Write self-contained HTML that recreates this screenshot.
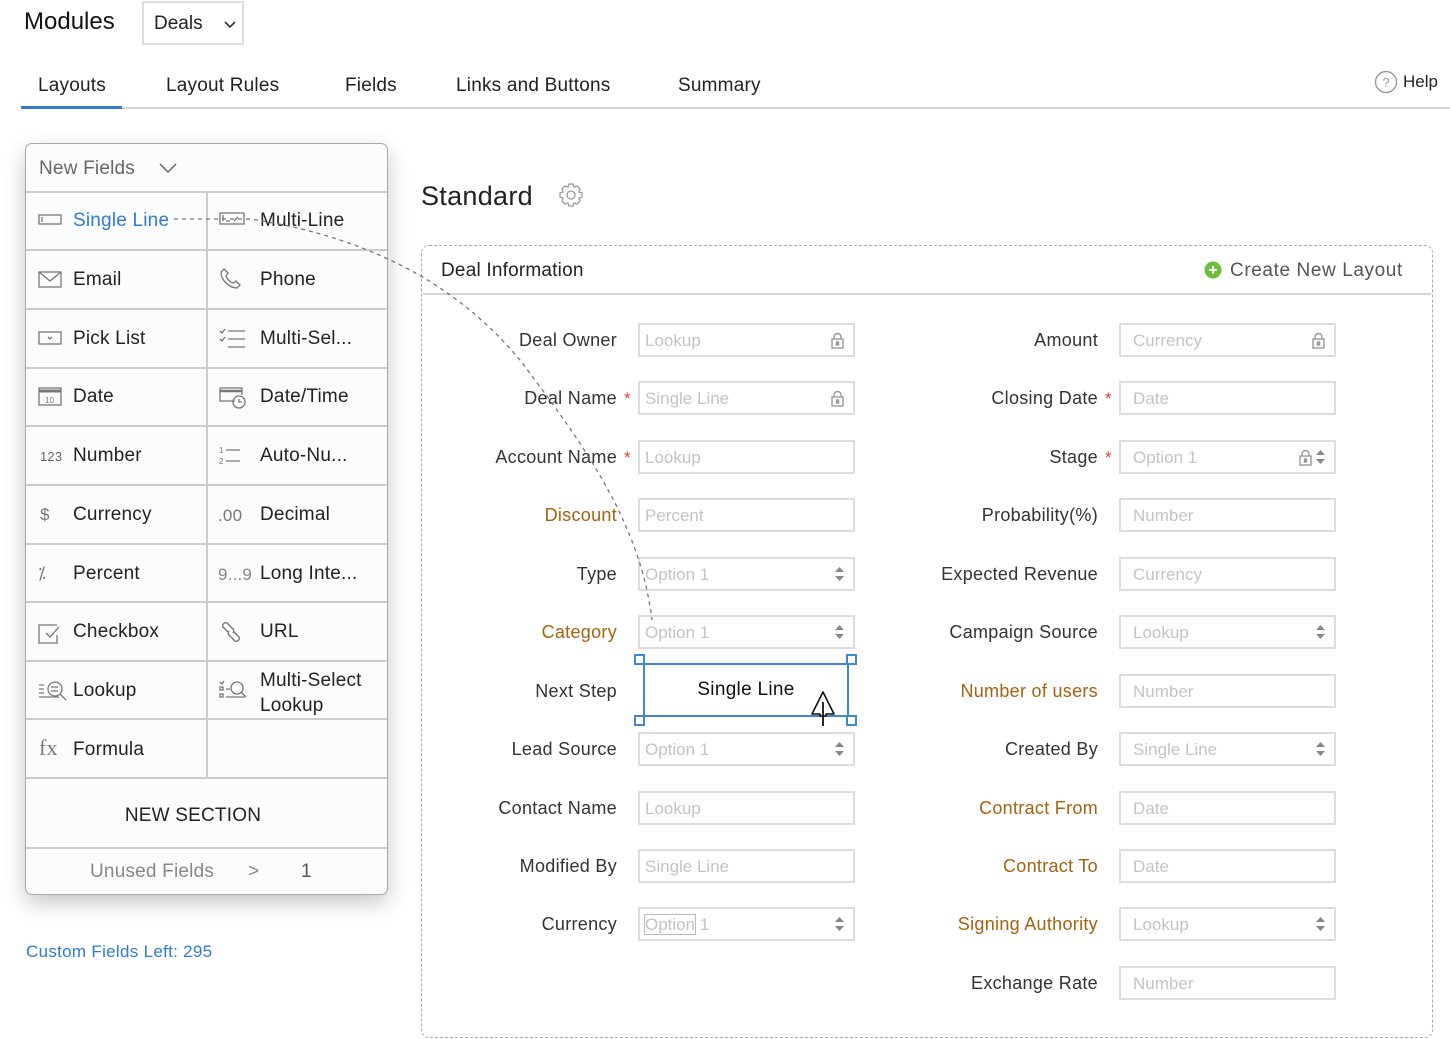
<!DOCTYPE html>
<html><head><meta charset="utf-8"><style>
*{box-sizing:border-box;margin:0;padding:0}
body{width:1450px;height:1039px;background:#fff;font-family:"Liberation Sans",sans-serif;color:#222;position:relative;overflow:hidden}
.a{position:absolute;white-space:nowrap}
.tab{position:absolute;top:75px;font-size:19px;color:#222;letter-spacing:0.2px}
.panel{position:absolute;left:25px;top:143px;width:363px;height:752px;border:1.5px solid #aaa;border-radius:7px;background:#fbfcfe;box-shadow:0 8px 22px rgba(0,0,0,.22)}
.hl{position:absolute;left:0;width:100%;height:1.5px;background:#ccc}
.cell{position:absolute;font-size:19px;color:#222;white-space:nowrap;letter-spacing:0.2px}
.ic{position:absolute}
.lbl{position:absolute;font-size:18px;color:#333;text-align:right;white-space:nowrap;letter-spacing:0.3px}
.or{color:#a5620f}
.in{position:absolute;width:217px;height:34px;border:2px solid #ddd;font-size:17px;color:#c4c4c4;padding:6px 0 0 5px;white-space:nowrap;background:#fff}
.ast{position:absolute;color:#e53b3b;font-size:17px}
.lk{position:absolute;right:9px;top:7px}
.ar{position:absolute;right:9px;top:8px}
</style></head><body>

<div class="a" style="left:24px;top:8px;font-size:24px;color:#111">Modules</div>
<div class="a" style="left:142px;top:1px;width:102px;height:44px;border:2px solid #ddd;font-size:19px;padding:10px 0 0 10px">Deals
<svg style="position:absolute;left:80px;top:18px" width="12" height="8"><path d="M1 1l5 5 5-5" stroke="#333" stroke-width="1.6" fill="none"/></svg></div>

<div class="tab" style="left:38px">Layouts</div>
<div class="tab" style="left:166px">Layout Rules</div>
<div class="tab" style="left:345px">Fields</div>
<div class="tab" style="left:456px">Links and Buttons</div>
<div class="tab" style="left:678px">Summary</div>
<div class="a" style="left:21px;top:107px;width:1429px;height:2px;background:#d6d6d6"></div>
<div class="a" style="left:21px;top:106px;width:101px;height:3px;background:#2f7bd0"></div>
<svg class="a" style="left:1374px;top:70px" width="24" height="24"><circle cx="12" cy="12" r="10.5" stroke="#999" stroke-width="1.4" fill="none"/><text x="12" y="17" font-size="13" text-anchor="middle" fill="#999" font-family="Liberation Sans">?</text></svg>
<div class="a" style="left:1403px;top:72px;font-size:17px">Help</div>

<!-- left panel -->
<div class="panel">
 <div class="cell" style="left:13px;top:14px;color:#666">New Fields</div>
 <svg class="ic" style="left:133px;top:19px" width="18" height="11"><path d="M1 1l8 8 8-8" stroke="#666" stroke-width="1.5" fill="none"/></svg>
 <div class="hl" style="top:47px"></div>
 <div style="position:absolute;left:180px;top:47px;width:1.5px;height:587px;background:#ccc"></div>
 <div class="hl" style="top:105px"></div><div class="hl" style="top:164px"></div><div class="hl" style="top:223px"></div><div class="hl" style="top:281px"></div><div class="hl" style="top:340px"></div><div class="hl" style="top:399px"></div><div class="hl" style="top:457px"></div><div class="hl" style="top:516px"></div><div class="hl" style="top:574px"></div><div class="hl" style="top:633px"></div><div class="hl" style="top:703px"></div>

 <div class="cell" style="left:47px;top:66px;color:#2f7bd0">Single Line</div>
 <div class="cell" style="left:234px;top:66px">Multi-Line</div>
 <div class="cell" style="left:47px;top:125px">Email</div>
 <div class="cell" style="left:234px;top:125px">Phone</div>
 <div class="cell" style="left:47px;top:184px">Pick List</div>
 <div class="cell" style="left:234px;top:184px">Multi-Sel...</div>
 <div class="cell" style="left:47px;top:242px">Date</div>
 <div class="cell" style="left:234px;top:242px">Date/Time</div>
 <div class="cell" style="left:47px;top:301px">Number</div>
 <div class="cell" style="left:234px;top:301px">Auto-Nu...</div>
 <div class="cell" style="left:47px;top:360px">Currency</div>
 <div class="cell" style="left:234px;top:360px">Decimal</div>
 <div class="cell" style="left:47px;top:419px">Percent</div>
 <div class="cell" style="left:234px;top:419px">Long Inte...</div>
 <div class="cell" style="left:47px;top:477px">Checkbox</div>
 <div class="cell" style="left:234px;top:477px">URL</div>
 <div class="cell" style="left:47px;top:536px">Lookup</div>
 <div class="cell" style="left:234px;top:524px;line-height:25px">Multi-Select<br>Lookup</div>
 <div class="cell" style="left:47px;top:595px">Formula</div>
 <div class="cell" style="left:0;width:334px;text-align:center;top:661px">NEW SECTION</div>
 <div class="cell" style="left:64px;top:717px;color:#888">Unused Fields</div>
 <div class="cell" style="left:222px;top:717px;color:#888">&gt;</div>
 <div class="cell" style="left:275px;top:717px;color:#555">1</div>

 <svg class="ic" style="left:12px;top:68px" width="26" height="150" fill="none" stroke="#777" stroke-width="1.3">
  <rect x="1" y="3" width="22" height="9"/><path d="M4 5v5"/>
  <rect x="1" y="60" width="22" height="15"/><path d="M1 60l11 9 11-9"/>
  <rect x="1" y="120" width="22" height="12"/><path d="M10 125l2 2 2-2"/>
 </svg>
 <svg class="ic" style="left:12px;top:241px" width="26" height="30" fill="none" stroke="#777" stroke-width="1.3"><rect x="1" y="3" width="22" height="17"/><path d="M1 6h22" stroke-width="3"/><text x="7" y="18" font-size="8" fill="#777" stroke="none">10</text></svg>
 <div class="cell" style="left:14px;top:305px;font-size:13px;color:#666">123</div>
 <div class="cell" style="left:14px;top:361px;font-size:17px;color:#777">$</div>
 <div class="cell" style="left:12px;top:420px;font-size:17px;color:#777">⁒</div>
 <svg class="ic" style="left:12px;top:477px" width="26" height="26" fill="none" stroke="#777" stroke-width="1.3"><path d="M19 4H1v18h18v-8"/><path d="M8 12l4 4 9-10"/></svg>
 <svg class="ic" style="left:12px;top:534px" width="32" height="26" fill="none" stroke="#777" stroke-width="1.3"><path d="M1 7h5M1 11h5M1 15h5M1 19h20"/><circle cx="17" cy="11" r="7"/><path d="M13 9h7M13 13h7M22 16l6 6"/></svg>
 <div class="cell" style="left:13px;top:591px;font-size:22px;color:#777;font-family:'Liberation Serif',serif">fx</div>

 <svg class="ic" style="left:193px;top:66px" width="28" height="20" fill="none" stroke="#777" stroke-width="1.3"><rect x="1" y="3" width="24" height="11"/><path d="M4 5v6M7 11h4M15 11l4-4"/></svg>
 <svg class="ic" style="left:193px;top:123px" width="24" height="24" fill="none" stroke="#777" stroke-width="1.3"><path d="M5 2l4 4-2 3c1 3 4 6 7 7l3-2 4 4-3 3C10 21 2 13 2 5z"/></svg>
 <svg class="ic" style="left:193px;top:183px" width="28" height="24" fill="none" stroke="#777" stroke-width="1.3"><path d="M1 4l2 2 3-4M1 12l2 2 3-4M9 4h17M9 12h17M9 20h17"/></svg>
 <svg class="ic" style="left:193px;top:241px" width="30" height="26" fill="none" stroke="#777" stroke-width="1.3"><path d="M16 16H1V3h22v7"/><path d="M1 6h22" stroke-width="2.5"/><circle cx="20" cy="17" r="6"/><path d="M20 14v3h3"/></svg>
 <svg class="ic" style="left:193px;top:301px" width="26" height="22" fill="none" stroke="#777" stroke-width="1.3"><text x="0" y="8" font-size="8" fill="#777" stroke="none">1</text><text x="0" y="19" font-size="8" fill="#777" stroke="none">2</text><path d="M7 5h14M7 16h14"/></svg>
 <div class="cell" style="left:192px;top:362px;font-size:17px;color:#777">.00</div>
 <div class="cell" style="left:192px;top:421px;font-size:17px;color:#888">9...9</div>
 <svg class="ic" style="left:193px;top:476px" width="28" height="28" fill="none" stroke="#777" stroke-width="1.4"><path d="M9 12L4 7a3 3 0 014-4l6 6a3 3 0 010 4M15 12l5 5a3 3 0 01-4 4l-6-6a3 3 0 010-4"/></svg>
 <svg class="ic" style="left:193px;top:534px" width="32" height="26" fill="none" stroke="#777" stroke-width="1.3"><rect x="1" y="9" width="3" height="3"/><rect x="1" y="16" width="3" height="3"/><path d="M1 4l2 2 2-3M7 11h4M7 19h19"/><circle cx="18" cy="10" r="6"/><path d="M22 14l5 5"/></svg>
</div>

<div class="a" style="left:26px;top:942px;font-size:17px;color:#2f7bd0;letter-spacing:0.3px">Custom Fields Left: 295</div>

<!-- right area -->
<div class="a" style="left:421px;top:181px;font-size:27px;color:#222;letter-spacing:0.3px">Standard</div>
<svg class="a" style="left:558px;top:182px" width="26" height="26" fill="none" stroke="#999" stroke-width="1.3"><circle cx="13" cy="13" r="4"/><path d="M11 2h4l1 3 3-1 3 3-1 3 3 1v4l-3 1 1 3-3 3-3-1-1 3h-4l-1-3-3 1-3-3 1-3-3-1v-4l3-1-1-3 3-3 3 1z"/></svg>

<div class="a" style="left:421px;top:245px;width:1012px;height:793px;border:1.5px dashed #aaa;border-radius:8px"></div>
<div class="a" style="left:441px;top:260px;font-size:19px;color:#222;letter-spacing:0.2px">Deal Information</div>
<svg class="a" style="left:1204px;top:261px" width="18" height="18"><circle cx="9" cy="9" r="8.5" fill="#6bbf3b"/><path d="M9 5v8M5 9h8" stroke="#fff" stroke-width="2"/></svg>
<div class="a" style="left:1230px;top:260px;font-size:19px;color:#555;letter-spacing:0.6px">Create New Layout</div>
<div class="a" style="left:423px;top:293px;width:1008px;height:1.5px;background:#d6d6d6"></div>

<!-- left column -->
<div class="lbl" style="left:380px;width:237px;top:330px">Deal Owner</div>
<div class="lbl" style="left:380px;width:237px;top:388px">Deal Name</div><div class="ast" style="left:624px;top:389px">*</div>
<div class="lbl" style="left:380px;width:237px;top:447px">Account Name</div><div class="ast" style="left:624px;top:448px">*</div>
<div class="lbl or" style="left:380px;width:237px;top:505px">Discount</div>
<div class="lbl" style="left:380px;width:237px;top:564px">Type</div>
<div class="lbl or" style="left:380px;width:237px;top:622px">Category</div>
<div class="lbl" style="left:380px;width:237px;top:681px">Next Step</div>
<div class="lbl" style="left:380px;width:237px;top:739px">Lead Source</div>
<div class="lbl" style="left:380px;width:237px;top:798px">Contact Name</div>
<div class="lbl" style="left:380px;width:237px;top:856px">Modified By</div>
<div class="lbl" style="left:380px;width:237px;top:914px">Currency</div>

<div class="in" style="left:638px;top:323px">Lookup<svg class="lk" width="13" height="17" fill="none" stroke="#999" stroke-width="1.4"><path d="M3 7V5a3.5 3.5 0 017 0v2"/><rect x="1" y="7" width="11" height="9"/><rect x="5.5" y="10" width="2" height="3" fill="#999"/></svg></div>
<div class="in" style="left:638px;top:381px">Single Line<svg class="lk" width="13" height="17" fill="none" stroke="#999" stroke-width="1.4"><path d="M3 7V5a3.5 3.5 0 017 0v2"/><rect x="1" y="7" width="11" height="9"/><rect x="5.5" y="10" width="2" height="3" fill="#999"/></svg></div>
<div class="in" style="left:638px;top:440px">Lookup</div>
<div class="in" style="left:638px;top:498px">Percent</div>
<div class="in" style="left:638px;top:557px">Option 1<svg class="ar" width="9" height="14"><path d="M4.5 0L9 5H0zM4.5 14L9 9H0z" fill="#888"/></svg></div>
<div class="in" style="left:638px;top:615px">Option 1<svg class="ar" width="9" height="14"><path d="M4.5 0L9 5H0zM4.5 14L9 9H0z" fill="#888"/></svg></div>
<div class="a" style="left:643px;top:663px;width:206px;height:54px;border:2.5px solid #3f87d0;background:#fff;font-size:19px;color:#111;text-align:center;padding-top:14px;letter-spacing:0.3px">Single Line</div>
<div class="a" style="left:634px;top:654px;width:11px;height:11px;border:2px solid #3f87d0;background:#fff"></div>
<div class="a" style="left:846px;top:654px;width:11px;height:11px;border:2px solid #3f87d0;background:#fff"></div>
<div class="a" style="left:634px;top:715px;width:11px;height:11px;border:2px solid #3f87d0;background:#fff"></div>
<div class="a" style="left:846px;top:715px;width:11px;height:11px;border:2px solid #3f87d0;background:#fff"></div>
<svg class="a" style="left:808px;top:690px" width="30" height="38"><path d="M15 2L4 24h8v2h6v-2h8z" fill="#fff" stroke="#111" stroke-width="1.6" stroke-linejoin="round"/><path d="M15 12v24" stroke="#111" stroke-width="1.8"/></svg>
<div class="in" style="left:638px;top:732px">Option 1<svg class="ar" width="9" height="14"><path d="M4.5 0L9 5H0zM4.5 14L9 9H0z" fill="#888"/></svg></div>
<div class="in" style="left:638px;top:791px">Lookup</div>
<div class="in" style="left:638px;top:849px">Single Line</div>
<div class="in" style="left:638px;top:907px"><span style="outline:1.5px solid #bbb">Option</span> 1<svg class="ar" width="9" height="14"><path d="M4.5 0L9 5H0zM4.5 14L9 9H0z" fill="#888"/></svg></div>

<!-- right column -->
<div class="lbl" style="left:860px;width:238px;top:330px">Amount</div>
<div class="lbl" style="left:860px;width:238px;top:388px">Closing Date</div><div class="ast" style="left:1105px;top:389px">*</div>
<div class="lbl" style="left:860px;width:238px;top:447px">Stage</div><div class="ast" style="left:1105px;top:448px">*</div>
<div class="lbl" style="left:860px;width:238px;top:505px">Probability(%)</div>
<div class="lbl" style="left:860px;width:238px;top:564px">Expected Revenue</div>
<div class="lbl" style="left:860px;width:238px;top:622px">Campaign Source</div>
<div class="lbl or" style="left:860px;width:238px;top:681px">Number of users</div>
<div class="lbl" style="left:860px;width:238px;top:739px">Created By</div>
<div class="lbl or" style="left:860px;width:238px;top:798px">Contract From</div>
<div class="lbl or" style="left:860px;width:238px;top:856px">Contract To</div>
<div class="lbl or" style="left:860px;width:238px;top:914px">Signing Authority</div>
<div class="lbl" style="left:860px;width:238px;top:973px">Exchange Rate</div>

<div class="in" style="left:1119px;top:323px;padding-left:12px">Currency<svg class="lk" width="13" height="17" fill="none" stroke="#999" stroke-width="1.4"><path d="M3 7V5a3.5 3.5 0 017 0v2"/><rect x="1" y="7" width="11" height="9"/><rect x="5.5" y="10" width="2" height="3" fill="#999"/></svg></div>
<div class="in" style="left:1119px;top:381px;padding-left:12px">Date</div>
<div class="in" style="left:1119px;top:440px;padding-left:12px">Option 1<svg class="lk" style="right:22px" width="13" height="17" fill="none" stroke="#999" stroke-width="1.4"><path d="M3 7V5a3.5 3.5 0 017 0v2"/><rect x="1" y="7" width="11" height="9"/><rect x="5.5" y="10" width="2" height="3" fill="#999"/></svg><svg class="ar" width="9" height="14"><path d="M4.5 0L9 5H0zM4.5 14L9 9H0z" fill="#888"/></svg></div>
<div class="in" style="left:1119px;top:498px;padding-left:12px">Number</div>
<div class="in" style="left:1119px;top:557px;padding-left:12px">Currency</div>
<div class="in" style="left:1119px;top:615px;padding-left:12px">Lookup<svg class="ar" width="9" height="14"><path d="M4.5 0L9 5H0zM4.5 14L9 9H0z" fill="#888"/></svg></div>
<div class="in" style="left:1119px;top:674px;padding-left:12px">Number</div>
<div class="in" style="left:1119px;top:732px;padding-left:12px">Single Line<svg class="ar" width="9" height="14"><path d="M4.5 0L9 5H0zM4.5 14L9 9H0z" fill="#888"/></svg></div>
<div class="in" style="left:1119px;top:791px;padding-left:12px">Date</div>
<div class="in" style="left:1119px;top:849px;padding-left:12px">Date</div>
<div class="in" style="left:1119px;top:907px;padding-left:12px">Lookup<svg class="ar" width="9" height="14"><path d="M4.5 0L9 5H0zM4.5 14L9 9H0z" fill="#888"/></svg></div>
<div class="in" style="left:1119px;top:966px;padding-left:12px">Number</div>

<!-- drag path -->
<svg class="a" style="left:0;top:0" width="1450" height="1039"><path d="M174 219H250C390 240 470 300 520 360C580 440 640 520 652 620" fill="none" stroke="#777" stroke-width="1.3" stroke-dasharray="4 4"/></svg>
</body></html>
